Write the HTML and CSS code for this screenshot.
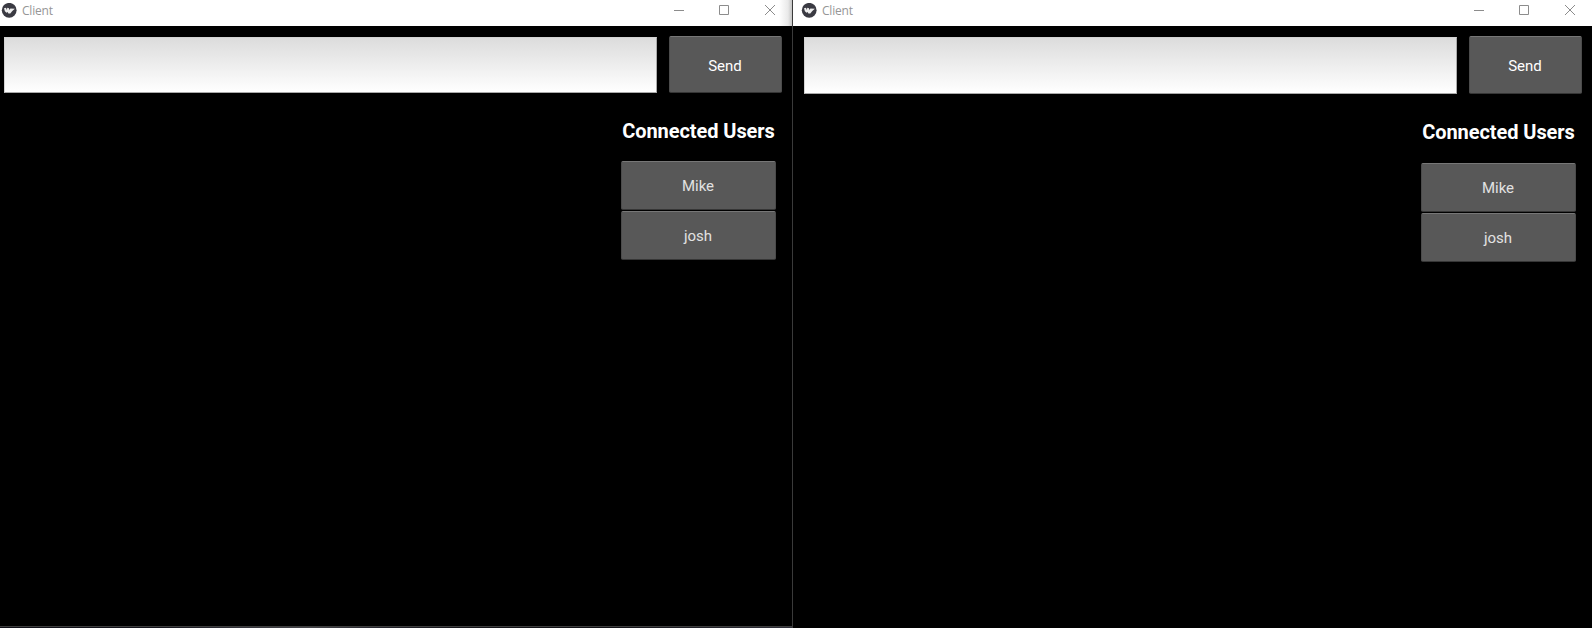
FILE: index.html
```
<!DOCTYPE html>
<html lang="en">
<head>
<meta charset="utf-8">
<title>Client</title>
<link rel="stylesheet" href="styles.css">
</head>
<body>
<main class="desktop">
  <section class="window window-left">
    <header class="titlebar">
      <svg class="logo" viewBox="0 0 16 15"><circle cx="8.200" cy="7.300" r="7.400"/><path d="M3 5.200L5 4.800 5.800 7 6.300 4.800 8 5.200 8.300 7 9.400 5.600 13.900 5.800 11.300 7.900 9.300 10.600 7.400 10.400 6.700 9 5.600 9.800 3.900 8.200z"/></svg>
      <span class="caption">Client</span>
      <svg class="controls" viewBox="0 0 104 12"><path d="M0 6.500h10M45.500 1.500h9v9h-9zM91 1l10 10M101 1L91 11"/></svg>
    </header>
    <div class="composer">
      <div class="message"></div>
      <button class="button send">Send</button>
    </div>
    <aside class="users">
      <h2 class="users-title">Connected Users</h2>
      <button class="button user">Mike</button>
      <button class="button user">josh</button>
    </aside>
    <div class="edge"></div>
  </section>
  <section class="window window-right">
    <header class="titlebar">
      <svg class="logo" viewBox="0 0 16 15"><circle cx="8.200" cy="7.300" r="7.400"/><path d="M3 5.200L5 4.800 5.800 7 6.300 4.800 8 5.200 8.300 7 9.400 5.600 13.900 5.800 11.300 7.900 9.300 10.600 7.400 10.400 6.700 9 5.600 9.800 3.900 8.200z"/></svg>
      <span class="caption">Client</span>
      <svg class="controls" viewBox="0 0 104 12"><path d="M0 6.500h10M45.500 1.500h9v9h-9zM91 1l10 10M101 1L91 11"/></svg>
    </header>
    <div class="composer">
      <div class="message"></div>
      <button class="button send">Send</button>
    </div>
    <aside class="users">
      <h2 class="users-title">Connected Users</h2>
      <button class="button user">Mike</button>
      <button class="button user">josh</button>
    </aside>
  </section>
</main>
</body>
</html>
```
FILE: styles.css
```
* { box-sizing: border-box; }
body { margin: 0; background: #000; font-family: Roboto, sans-serif; }
.desktop { display: flex; width: 1592px; height: 628px; overflow: hidden; }
.window { display: flex; flex-direction: column; background: #000; }
.window-left { width: 792px; }
.window-right { width: 800px; border-left: 1px solid #3a3a3a; }
.titlebar {
  display: flex;
  align-items: flex-start;
  height: 26px;
  padding: 3px 10px 0 1px;
  background: #fff;
}
.window-left .titlebar { background: linear-gradient(to left, #c4c4c4, #e9e9e9 4px, #fff 13px); }
.window-right .titlebar { padding-left: 8px; }
.logo { width: 16px; height: 15px; fill: #3a3a42; }
.logo path { fill: #eeeeee; }
.caption {
  margin-left: 5px;
  font: 12px/16px "Open Sans", sans-serif;
  letter-spacing: -0.2px;
  color: #969696;
}
.controls {
  width: 104px;
  height: 12px;
  margin: 1px 4px 0 auto;
  fill: none;
  stroke: #8c8c8c;
}
.composer { display: flex; padding: 10px 10px 0 4px; gap: 12px; }
.window-right .composer { padding-left: 11px; }
.message {
  flex: 1;
  height: 56px;
  margin-top: 1px;
  border: 1px solid #aaa;
  border-top-color: #d4d4d4;
  border-left-color: #d4d4d4;
  background: linear-gradient(#dcdcdc, #fff);
}
.button {
  display: flex;
  align-items: center;
  justify-content: center;
  padding: 0;
  border: 1px solid #4b4b4b;
  border-top-color: #777;
  border-bottom-color: #363636;
  border-radius: 2px;
  background: #585858;
  color: #fff;
  font: 15px/18px Roboto, sans-serif;
}
.send { width: 113px; height: 57px; padding: 3px 1px 0 0; }
.window-right .message { height: 57px; }
.window-right .send { height: 58px; padding-top: 2px; }
.users {
  display: flex;
  flex-direction: column;
  gap: 1px;
  width: 155px;
  margin: 26px 16px 0 auto;
}
.users-title {
  margin: 0 -8px 17px;
  font: bold 20px/24px Roboto, sans-serif;
  letter-spacing: -0.07px;
  color: #fff;
  text-align: center;
}
.window-right .users-title { margin-bottom: 17.500px; }
.user { height: 49px; padding: 1px 1px 0 0; color: #e2e2e2; }
.edge {
  height: 2px;
  margin-top: auto;
  border-top: 1px solid #3f3f3f;
  background: linear-gradient(to right, #101018, #15151d 160px, #34343c 240px, #45454a 310px, #25252e 380px, #17171c 460px, #111116 600px, #30303a 780px);
}
```
